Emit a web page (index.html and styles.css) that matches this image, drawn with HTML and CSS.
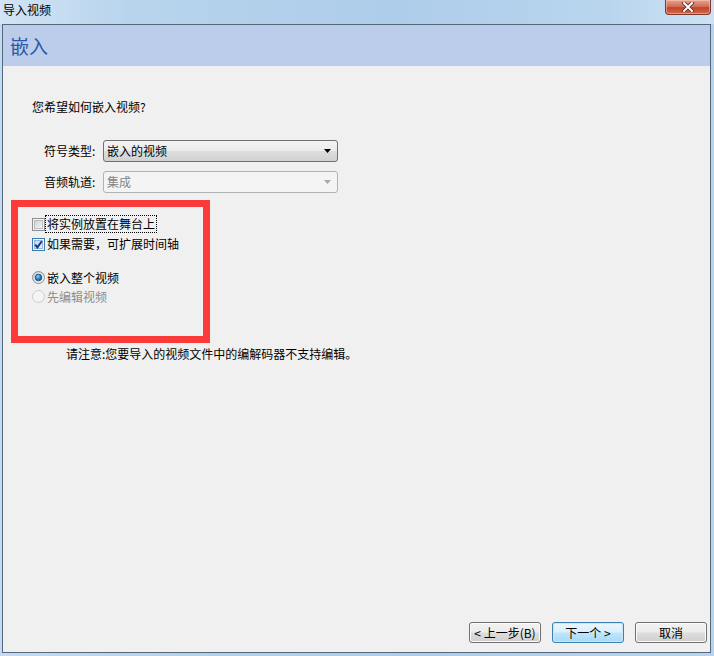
FILE: index.html
```html
<!DOCTYPE html>
<html lang="zh">
<head>
<meta charset="utf-8">
<title>导入视频</title>
<link rel="stylesheet" href="styles.css">
</head>
<body>
<div class="window">
  <div class="titlebar">
    <span class="title">导入视频</span>
    <span class="close">
      <svg width="18" height="10" viewBox="0 0 18 10">
        <path d="M5 1 L13 9 M13 1 L5 9" stroke="#5a2a22" stroke-width="3.6" stroke-linecap="square"/>
        <path d="M5 1 L13 9 M13 1 L5 9" stroke="#ffffff" stroke-width="2" stroke-linecap="square"/>
      </svg>
    </span>
  </div>
  <div class="panel">
    <div class="header"><h1 class="heading">嵌入</h1></div>
    <div class="content">
      <p class="question">您希望如何嵌入视频?</p>
      <div class="formrow">
        <span class="label">符号类型:</span>
        <div class="select">
          <span class="select-text">嵌入的视频</span>
          <svg class="arrow" width="7" height="4" viewBox="0 0 7 4"><path d="M0 0 H7 L3.5 4 Z" fill="#000"/></svg>
        </div>
      </div>
      <div class="formrow">
        <span class="label">音频轨道:</span>
        <div class="select disabled">
          <span class="select-text">集成</span>
          <svg class="arrow" width="7" height="4" viewBox="0 0 7 4"><path d="M0 0 H7 L3.5 4 Z" fill="#a8a8a8"/></svg>
        </div>
      </div>
      <div class="redbox">
        <div class="opt">
          <svg class="box" width="13" height="13" viewBox="0 0 13 13">
            <defs><linearGradient id="ug" x1="0" y1="0" x2="1" y2="1"><stop offset="0" stop-color="#cdd1d6"/><stop offset="1" stop-color="#f7f7f7"/></linearGradient></defs>
            <rect x="0.5" y="0.5" width="12" height="12" fill="#f4f4f4" stroke="#8e8f8f"/>
            <rect x="2.5" y="2.5" width="8" height="8" fill="url(#ug)" stroke="#b9bcc0"/>
          </svg>
          <span class="focus">将实例放置在舞台上</span>
        </div>
        <div class="opt">
          <svg class="box" width="13" height="13" viewBox="0 0 13 13">
            <defs><linearGradient id="cg" x1="0" y1="0" x2="1" y2="1"><stop offset="0" stop-color="#b9d7ee"/><stop offset="1" stop-color="#eaf4fb"/></linearGradient></defs>
            <rect x="0.5" y="0.5" width="12" height="12" fill="#f4f8fb" stroke="#3e7ab0"/>
            <rect x="2.5" y="2.5" width="8" height="8" fill="url(#cg)" stroke="#8fb6d8"/>
            <path d="M3.2 6.6 L5.4 9.4 L9.8 3.2" fill="none" stroke="#1d2f8c" stroke-width="1.9"/>
          </svg>
          <span>如果需要，可扩展时间轴</span>
        </div>
        <div class="opt radio-first">
          <svg class="box" width="13" height="13" viewBox="0 0 13 13">
            <defs>
              <linearGradient id="rg" x1="0" y1="0" x2="1" y2="1"><stop offset="0" stop-color="#c9ccd1"/><stop offset="1" stop-color="#f8f8f8"/></linearGradient>
              <radialGradient id="dot" cx="0.4" cy="0.35" r="0.7"><stop offset="0" stop-color="#8fd4ff"/><stop offset="0.6" stop-color="#1a7cc4"/><stop offset="1" stop-color="#0d3f78"/></radialGradient>
            </defs>
            <circle cx="6.5" cy="6.5" r="6" fill="url(#rg)" stroke="#8e8f8f"/>
            <circle cx="6.5" cy="6.5" r="3.3" fill="url(#dot)" stroke="#1c4f80" stroke-width="0.8"/>
          </svg>
          <span>嵌入整个视频</span>
        </div>
        <div class="opt disabled-opt">
          <svg class="box" width="13" height="13" viewBox="0 0 13 13">
            <circle cx="6.5" cy="6.5" r="6" fill="#f4f4f4" stroke="#cbcbcb"/>
          </svg>
          <span>先编辑视频</span>
        </div>
      </div>
      <p class="note">请注意:您要导入的视频文件中的编解码器不支持编辑。</p>
    </div>
    <div class="buttons">
      <button class="btn">&lt; 上一步(<u>B</u>)</button>
      <button class="btn default">下一个 &gt;</button>
      <button class="btn">取消</button>
    </div>
  </div>
</div>
</body>
</html>
```
FILE: styles.css
```css
* { box-sizing: border-box; }
html, body { margin: 0; padding: 0; }
body {
  width: 714px;
  height: 656px;
  overflow: hidden;
  font-family: "Noto Sans CJK SC", "Liberation Sans", sans-serif;
  font-size: 12px;
  color: #000;
}
.window {
  width: 714px;
  height: 656px;
  display: flex;
  flex-direction: column;
  background: linear-gradient(90deg, #c3dbf1 0%, #b2d0eb 30%, #adcdea 60%, #b7d4ee 100%);
}
.titlebar {
  height: 24px;
  flex: none;
  display: flex;
  align-items: flex-start;
  justify-content: space-between;
  background: linear-gradient(90deg, #d2e4f5 0%, #b8d4ed 18%, #aecdea 55%, #b9d5ee 85%, #cde2f4 100%);
}
.title {
  margin-left: 3px;
  margin-top: 2px;
  line-height: 16px;
  font-size: 12px;
  color: #000;
}
.close {
  width: 46px;
  height: 15px;
  margin-right: 3px;
  display: flex;
  align-items: center;
  justify-content: center;
  border: 1px solid #7a3a2e;
  border-top: none;
  border-radius: 0 0 4px 4px;
  background: linear-gradient(180deg, #e7a08e 0%, #d4705a 45%, #c0452c 55%, #d46a4a 100%);
  box-shadow: inset 0 0 0 1px rgba(255, 220, 200, 0.45);
}
.panel {
  flex: 1;
  margin: 0 3px 3px 2px;
  border: 1px solid #56677c;
  background: #f0f0f0;
  display: flex;
  flex-direction: column;
}
.header {
  height: 41px;
  flex: none;
  background: #bccdeb;
  display: flex;
  align-items: center;
  padding-left: 7px;
}
.heading {
  margin: 0;
  font-weight: normal;
  font-size: 19px;
  line-height: 24px;
  color: #2d58a6;
}
.content {
  display: flex;
  flex-direction: column;
}
.question {
  margin: 34px 0 0 29px;
  line-height: 14px;
}
.formrow {
  display: flex;
  align-items: center;
  height: 22px;
  margin-left: 41px;
}
.question + .formrow { margin-top: 26px; }
.formrow + .formrow { margin-top: 9px; }
.label {
  width: 59px;
  line-height: 14px;
}
.select {
  width: 235px;
  height: 22px;
  border: 1px solid #707070;
  border-radius: 3px;
  display: flex;
  align-items: center;
  justify-content: space-between;
  padding: 0 6px 0 3px;
  background: linear-gradient(180deg, #f3f3f3 0%, #ebebeb 48%, #dddddd 52%, #d1d1d1 100%);
}
.select-text { line-height: 14px; }
.select.disabled {
  border-color: #adb2b5;
  background: #f4f4f4;
  color: #838383;
}
.arrow { flex: none; }
.redbox {
  margin: 7px 0 0 8px;
  width: 199px;
  height: 143px;
  border: 7px solid #fb3a3a;
  padding: 7px 0 0 14px;
  display: flex;
  flex-direction: column;
}
.opt {
  height: 20px;
  display: flex;
  align-items: center;
  gap: 2px;
  line-height: 14px;
}
.opt.radio-first { margin-top: 14px; height: 19px; }
.opt.disabled-opt { height: 19px; color: #8d8d8d; }
.box { flex: none; }
.focus {
  outline: 1px dotted #000;
  outline-offset: 1px;
}
.note {
  margin: 4px 0 0 63px;
  line-height: 14px;
}
.buttons {
  margin-top: auto;
  display: flex;
  justify-content: flex-end;
  gap: 11px;
  padding: 0 3px 9px 0;
}
.btn {
  width: 72px;
  height: 21px;
  padding: 0;
  font-family: "Noto Sans CJK SC", "Liberation Sans", sans-serif;
  font-size: 12px;
  line-height: 14px;
  color: #000;
  border: 1px solid #707070;
  border-radius: 3px;
  background: linear-gradient(180deg, #f2f2f2 0%, #ebebeb 48%, #dddddd 52%, #cfcfcf 100%);
  box-shadow: inset 0 0 0 1px #fbfbfb;
}
.btn u { text-decoration: none; }
.btn.default {
  border-color: #3c7fb1;
  background: linear-gradient(180deg, #eaf6fd 0%, #d9f0fc 48%, #bee6fd 52%, #a7d9f5 100%);
  box-shadow: inset 0 0 0 1px #c6e8fa;
}
```
